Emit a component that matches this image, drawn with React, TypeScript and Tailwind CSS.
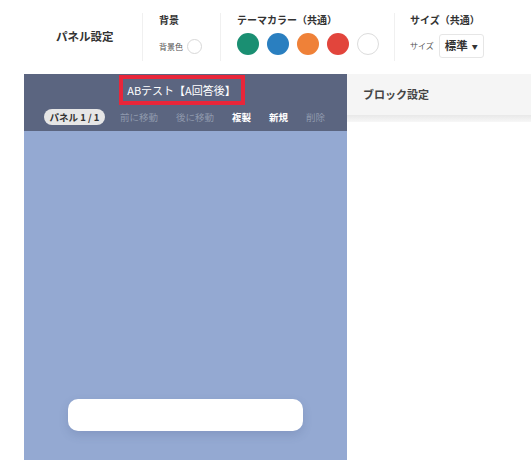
import React from "react";

export default function App() {
  const colors = ["#1a8f72", "#2a7fc0", "#ef8138", "#e2453c", "#ffffff"];
  return (
    <div className="w-[531px] h-[460px] bg-white overflow-hidden flex flex-col font-['Noto_Sans_CJK_JP',sans-serif] text-[#333]">
      {/* Top toolbar */}
      <div className="h-[74px] flex items-stretch shrink-0">
        <div className="w-[142px] flex items-center pl-[56px]">
          <span className="text-[11.5px] font-bold text-[#333]">パネル設定</span>
        </div>
        <div className="w-px bg-[#f0f0f0] my-[13px]" />
        <div className="w-[77px] pl-[16px] pt-[12px] flex flex-col">
          <span className="text-[10px] font-bold leading-[16px] text-[#333]">背景</span>
          <div className="flex items-center gap-[4px] mt-[11px]">
            <span className="text-[8px] text-[#555]">背景色</span>
            <span className="w-[15px] h-[15px] rounded-full border border-[#d8d8d8] bg-white" />
          </div>
        </div>
        <div className="w-px bg-[#f0f0f0] my-[13px]" />
        <div className="w-[173px] pl-[16px] pt-[12px] flex flex-col">
          <span className="text-[10px] font-bold leading-[16px] text-[#333]">テーマカラー（共通）</span>
          <div className="flex items-center gap-[8px] mt-[5px]">
            {colors.map((c) => (
              <span
                key={c}
                className={`w-[22px] h-[22px] rounded-full ${c === "#ffffff" ? "border border-[#dcdcdc]" : ""}`}
                style={{ backgroundColor: c }}
              />
            ))}
          </div>
        </div>
        <div className="w-px bg-[#f0f0f0] my-[13px]" />
        <div className="flex-1 pl-[15px] pt-[12px] flex flex-col">
          <span className="text-[10px] font-bold leading-[16px] text-[#333]">サイズ（共通）</span>
          <div className="flex items-center gap-[5px] mt-[6px]">
            <span className="text-[8px] text-[#555]">サイズ</span>
            <div className="h-[24px] w-[45px] rounded-[3px] border border-[#e6e6e6] bg-white flex items-center justify-center gap-[4px]">
              <span className="text-[11.5px] font-bold text-[#333]">標準</span>
              <span className="text-[6px] text-[#333]">▼</span>
            </div>
          </div>
        </div>
      </div>

      {/* Main area */}
      <div className="flex-1 flex pl-[24px]">
        {/* Left panel */}
        <div className="w-[323px] flex flex-col">
          <div className="h-[57px] bg-[#5b6580] flex flex-col items-center">
            <div className="mt-[1px] -ml-[8px] border-[4px] border-[#e8263a] h-[30px] w-[126px] flex items-center justify-center">
              <span className="text-[11px] text-white">ABテスト【A回答後】</span>
            </div>
            <div className="self-stretch flex items-center pl-[20px] mt-[4px] h-[16px]">
              <span className="h-[16px] w-[61px] rounded-full bg-[#e6e6e6] text-[#333] text-[9.5px] font-bold flex items-center justify-center">
                パネル 1 / 1
              </span>
              <span className="ml-[15px] text-[9.5px] text-[#8f99ad]">前に移動</span>
              <span className="ml-[18px] text-[9.5px] text-[#8f99ad]">後に移動</span>
              <span className="ml-[18px] text-[9.5px] font-bold text-white">複製</span>
              <span className="ml-[18px] text-[9.5px] font-bold text-white">新規</span>
              <span className="ml-[18px] text-[9.5px] text-[#8f99ad]">削除</span>
            </div>
          </div>
          <div className="flex-1 bg-[#94a9d2] flex flex-col items-center">
            <div className="mt-[268px] w-[235px] h-[32px] rounded-[10px] bg-white shadow-[0_4px_10px_rgba(60,80,120,0.18)]" />
          </div>
        </div>
        {/* Right panel */}
        <div className="flex-1 flex flex-col">
          <div className="h-[41px] bg-[#f5f5f5] flex items-center pl-[16px]">
            <span className="text-[11px] font-bold text-[#444]">ブロック設定</span>
          </div>
          <div className="h-[7px] bg-gradient-to-b from-[#e8e8e8] to-[#f7f7f7]" />
          <div className="flex-1 bg-white" />
        </div>
      </div>
    </div>
  );
}
